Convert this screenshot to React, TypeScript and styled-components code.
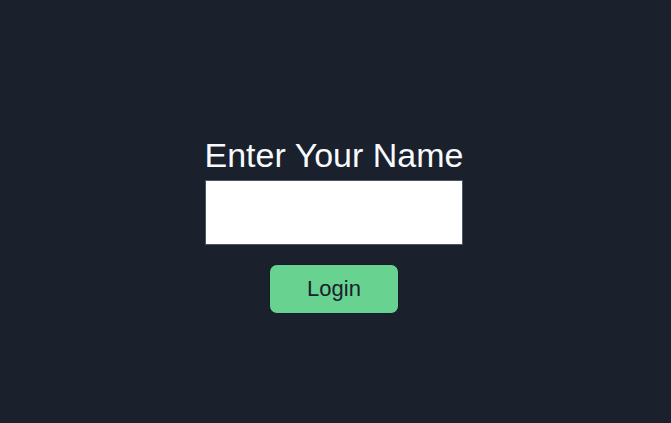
import React, { useState } from "react";
import styled, { createGlobalStyle } from "styled-components";

const GlobalStyle = createGlobalStyle`
  html, body {
    margin: 0;
    padding: 0;
    background: #1a202c;
    font-family: "Liberation Sans", Arial, sans-serif;
  }
`;

export default function App() {
  const [name, setName] = useState("");

  return (
    <>
      <GlobalStyle />
      <Page>
        <Form onSubmit={(e) => e.preventDefault()}>
          <Title>Enter Your Name</Title>
          <NameInput value={name} onChange={(e) => setName(e.target.value)} />
          <LoginButton type="submit">Login</LoginButton>
        </Form>
      </Page>
    </>
  );
}

const Page = styled.div`
  height: 423px;
  display: flex;
  justify-content: center;
  padding-top: 135px;
  padding-right: 3px;
  box-sizing: border-box;
`;

const Form = styled.form`
  display: flex;
  flex-direction: column;
  align-items: center;
  margin: 0;
`;

const Title = styled.h1`
  margin: 0 0 5px;
  font-size: 34px;
  line-height: 40px;
  font-weight: 400;
  color: #f7fafc;
`;

const NameInput = styled.input`
  width: 258px;
  height: 65px;
  box-sizing: border-box;
  border: 1px solid #4a5568;
  background: #ffffff;
  font-size: 20px;
  padding: 0 12px;
  outline: none;
`;

const LoginButton = styled.button`
  margin-top: 19px;
  width: 130px;
  height: 50px;
  box-sizing: border-box;
  border: 1px solid #171c26;
  border-radius: 8px;
  background: #68d391;
  color: #1a202c;
  font-family: "Liberation Sans", Arial, sans-serif;
  font-size: 22px;
  cursor: pointer;
`;
